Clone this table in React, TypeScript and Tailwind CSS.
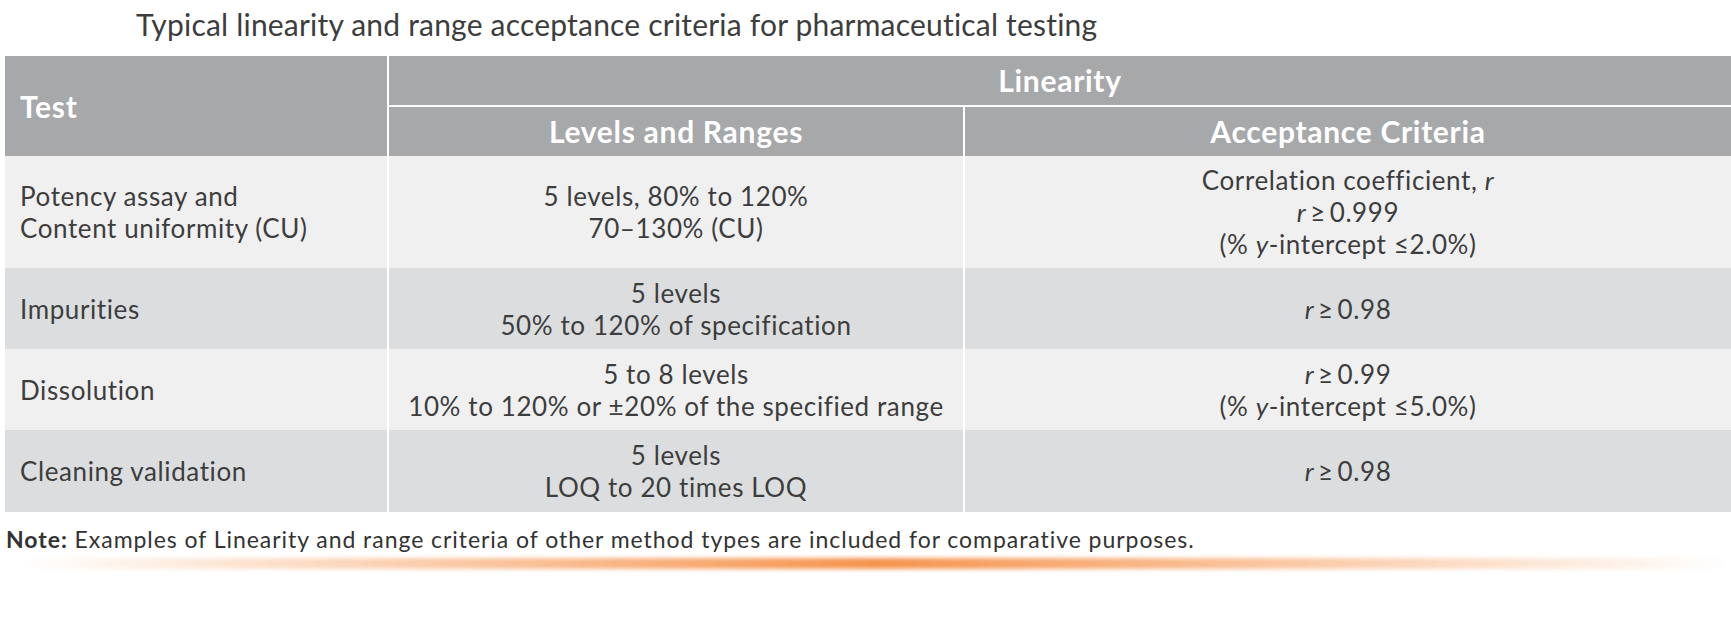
import React from "react";

const font = { fontFamily: "Lato, 'Noto Sans', sans-serif" };

function R() {
  return <span className="italic">r</span>;
}
function Y() {
  return <span className="italic">y</span>;
}

const rows: { bg: string; h: string; test: React.ReactNode; levels: React.ReactNode; crit: React.ReactNode }[] = [
  {
    bg: "bg-[#f0f0f1]",
    h: "h-[112px]",
    test: (
      <>
        Potency assay and
        <br />
        Content uniformity (CU)
      </>
    ),
    levels: (
      <>
        5 levels, 80% to 120%
        <br />
        70–130% (CU)
      </>
    ),
    crit: (
      <>
        Correlation coefficient, <R />
        <br />
        <R />{"\u2009≥\u2009"}0.999
        <br />
        (% <Y />-intercept ≤2.0%)
      </>
    ),
  },
  {
    bg: "bg-[#dcdddf]",
    h: "h-[81px]",
    test: <>Impurities</>,
    levels: (
      <>
        5 levels
        <br />
        50% to 120% of specification
      </>
    ),
    crit: (
      <>
        <R />{"\u2009≥\u2009"}0.98
      </>
    ),
  },
  {
    bg: "bg-[#f0f0f1]",
    h: "h-[81px]",
    test: <>Dissolution</>,
    levels: (
      <>
        5 to 8 levels
        <br />
        10% to 120% or ±20% of the specified range
      </>
    ),
    crit: (
      <>
        <R />{"\u2009≥\u2009"}0.99
        <br />
        (% <Y />-intercept ≤5.0%)
      </>
    ),
  },
  {
    bg: "bg-[#dcdddf]",
    h: "h-[82px]",
    test: <>Cleaning validation</>,
    levels: (
      <>
        5 levels
        <br />
        LOQ to 20 times LOQ
      </>
    ),
    crit: (
      <>
        <R />{"\u2009≥\u2009"}0.98
      </>
    ),
  },
];

export default function App() {
  return (
    <div className="w-[1731px] h-[633px] bg-white text-[#3d3d3d] overflow-hidden" style={font}>
      <div className="h-[56px] pl-[136px] pt-[6px] text-[30px] leading-[36px] tracking-[0.2px] text-[#3d3d3d]">
        Typical linearity and range acceptance criteria for pharmaceutical testing
      </div>
      <div className="ml-[5px] grid grid-cols-[382px_574px_1fr] gap-x-[2px] bg-white">
        <div className="row-span-2 bg-[#a7a8aa] flex items-center pl-[15px] text-white font-bold text-[30px] tracking-[0.7px]">
          Test
        </div>
        <div className="col-span-2 h-[49px] bg-[#a7a8aa] flex items-center justify-center text-white font-bold text-[30px] tracking-[0.7px]">
          Linearity
        </div>
        <div className="h-[51px] border-t-2 border-white bg-[#a7a8aa] flex items-center justify-center text-white font-bold text-[30px] tracking-[0.7px]">
          Levels and Ranges
        </div>
        <div className="h-[51px] border-t-2 border-white bg-[#a7a8aa] flex items-center justify-center text-white font-bold text-[30px] tracking-[0.7px]">
          Acceptance Criteria
        </div>
        {rows.map((r, i) => (
          <React.Fragment key={i}>
            <div className={`${r.bg} ${r.h} flex items-center pl-[15px] text-[26px] leading-[32px] tracking-[0.6px]`}>
              <div>{r.test}</div>
            </div>
            <div className={`${r.bg} ${r.h} flex items-center justify-center text-center text-[26px] leading-[32px] tracking-[0.6px]`}>
              <div>{r.levels}</div>
            </div>
            <div className={`${r.bg} ${r.h} flex items-center justify-center text-center text-[26px] leading-[32px] tracking-[0.6px]`}>
              <div>{r.crit}</div>
            </div>
          </React.Fragment>
        ))}
      </div>
      <div className="mt-[13px] pl-[6px] text-[23px] leading-[28px] tracking-[0.95px] text-[#333333]">
        <span className="font-bold">Note:</span> Examples of Linearity and range criteria of other method types are
        included for comparative purposes.
      </div>
      <div className="mt-[5px] ml-[20px] h-[11px] bg-linear-to-r from-transparent via-[#f4883a] to-transparent blur-[2px] opacity-90" />
    </div>
  );
}
